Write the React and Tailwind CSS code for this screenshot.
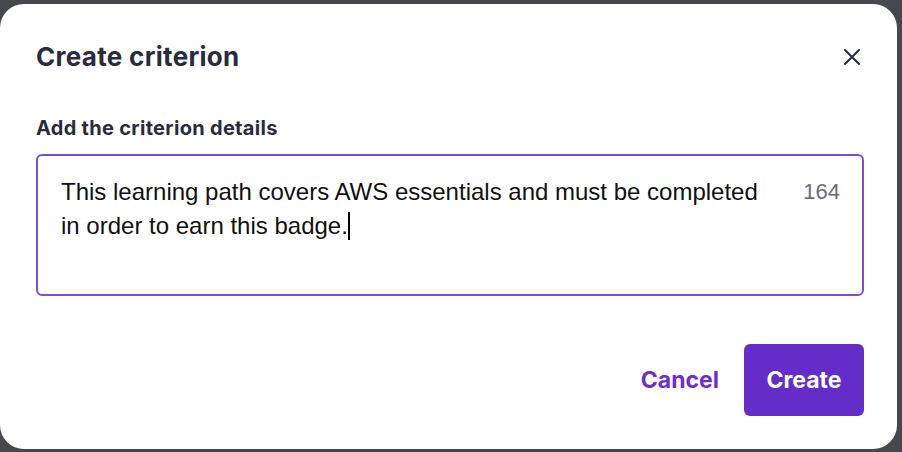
import React from 'react';

const CloseIcon = () => (
  <svg width="18" height="18" viewBox="0 0 18 18" fill="none" stroke="#2a2b3b" strokeWidth="2" strokeLinecap="round">
    <path d="M2 2 L16 16 M16 2 L2 16" />
  </svg>
);

export default function App() {
  return (
    <div className="w-[902px] h-[452px] bg-[#47484d] pt-[4px] overflow-hidden">
      <div className="w-[897px] h-[445px] bg-white rounded-[24px] pl-9 pr-[33px] flex flex-col">
        {/* Cabecera */}
        <div className="mt-[37px] h-8 flex items-center justify-between">
          <h2 className="text-[26px] leading-8 font-bold text-[#2a2b3b] font-['Inter',sans-serif] tracking-[0.3px]">
            Create criterion
          </h2>
          <button className="w-[18px] h-[18px] mr-[3px] flex items-center justify-center">
            <CloseIcon />
          </button>
        </div>

        <label className="mt-[43px] text-[20px] leading-6 font-bold text-[#2a2b3b] font-['Inter',sans-serif] tracking-[0.3px]">
          Add the criterion details
        </label>

        {/* Caja de texto */}
        <div className="mt-[14px] w-[828px] h-[142px] border-2 border-[#7c4ddb] rounded-[6px] pl-[23px] pr-[22px] pt-[19px] flex justify-between font-['Liberation_Sans',sans-serif] text-[24px] leading-[34px]">
          <div className="text-[#111111]">
            This learning path covers AWS essentials and must be completed
            <br />
            in order to earn this badge.
            <span className="inline-block w-[2px] h-[28px] bg-black align-middle -mt-[3px]"></span>
          </div>
          <div className="text-[#686c7e] text-[22px]">164</div>
        </div>

        {/* Acciones */}
        <div className="mt-auto mb-[33px] flex items-center justify-end gap-[25px]">
          <button className="text-[23px] font-bold text-[#6a2fd0] font-['Inter',sans-serif]">
            Cancel
          </button>
          <button className="w-[120px] h-[72px] rounded-[6px] bg-[#642cc8] text-white text-[23px] font-bold font-['Inter',sans-serif]">
            Create
          </button>
        </div>
      </div>
    </div>
  );
}
